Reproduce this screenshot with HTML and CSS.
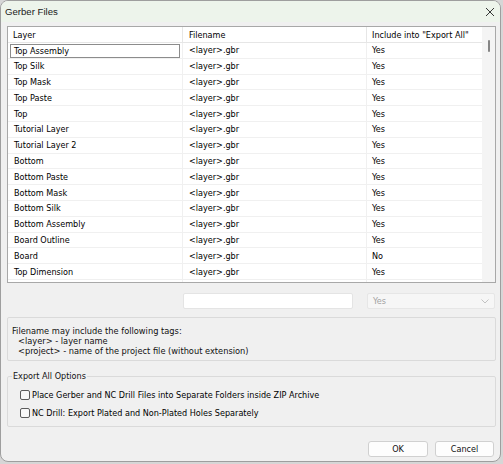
FILE: index.html
```html
<!DOCTYPE html>
<html>
<head>
<meta charset="utf-8">
<link rel="stylesheet" href="styles.css">
</head>
<body>
<div class="win">
  <div class="titlebar">
    <span class="title">Gerber Files</span>
    <svg class="close" width="10" height="10" viewBox="0 0 10 10"><path d="M1 1 L9 9 M9 1 L1 9" stroke="#222" stroke-width="0.9" fill="none"/></svg>
  </div>
  <div class="content">
    <div class="grid">
      <div class="cols">
        <div class="hrow">
          <div class="c1">Layer</div>
          <div class="c2">Filename</div>
          <div class="c3">Include into &quot;Export All&quot;</div>
        </div>
        <div class="row"><div class="c1 focused"><span class="focus">Top Assembly</span></div><div class="c2">&lt;layer&gt;.gbr</div><div class="c3">Yes</div></div>
        <div class="row"><div class="c1">Top Silk</div><div class="c2">&lt;layer&gt;.gbr</div><div class="c3">Yes</div></div>
        <div class="row"><div class="c1">Top Mask</div><div class="c2">&lt;layer&gt;.gbr</div><div class="c3">Yes</div></div>
        <div class="row"><div class="c1">Top Paste</div><div class="c2">&lt;layer&gt;.gbr</div><div class="c3">Yes</div></div>
        <div class="row"><div class="c1">Top</div><div class="c2">&lt;layer&gt;.gbr</div><div class="c3">Yes</div></div>
        <div class="row"><div class="c1">Tutorial Layer</div><div class="c2">&lt;layer&gt;.gbr</div><div class="c3">Yes</div></div>
        <div class="row"><div class="c1">Tutorial Layer 2</div><div class="c2">&lt;layer&gt;.gbr</div><div class="c3">Yes</div></div>
        <div class="row"><div class="c1">Bottom</div><div class="c2">&lt;layer&gt;.gbr</div><div class="c3">Yes</div></div>
        <div class="row"><div class="c1">Bottom Paste</div><div class="c2">&lt;layer&gt;.gbr</div><div class="c3">Yes</div></div>
        <div class="row"><div class="c1">Bottom Mask</div><div class="c2">&lt;layer&gt;.gbr</div><div class="c3">Yes</div></div>
        <div class="row"><div class="c1">Bottom Silk</div><div class="c2">&lt;layer&gt;.gbr</div><div class="c3">Yes</div></div>
        <div class="row"><div class="c1">Bottom Assembly</div><div class="c2">&lt;layer&gt;.gbr</div><div class="c3">Yes</div></div>
        <div class="row"><div class="c1">Board Outline</div><div class="c2">&lt;layer&gt;.gbr</div><div class="c3">Yes</div></div>
        <div class="row"><div class="c1">Board</div><div class="c2">&lt;layer&gt;.gbr</div><div class="c3">No</div></div>
        <div class="row"><div class="c1">Top Dimension</div><div class="c2">&lt;layer&gt;.gbr</div><div class="c3">Yes</div></div>
        <div class="row"><div class="c1"></div><div class="c2"></div><div class="c3"></div></div>
      </div>
      <div class="scroll"><div class="thumb"></div></div>
    </div>

    <div class="editrow">
      <div class="input"></div>
      <div class="select"><span>Yes</span>
        <svg width="8" height="5" viewBox="0 0 8 5"><path d="M0.5 0.5 L4 4 L7.5 0.5" stroke="#b5b5b5" stroke-width="0.8" fill="none"/></svg>
      </div>
    </div>

    <div class="info">
      <div>Filename may include the following tags:</div>
      <div class="ind">&lt;layer&gt; - layer name</div>
      <div class="ind">&lt;project&gt; - name of the project file (without extension)</div>
    </div>

    <fieldset class="group">
      <legend>Export All Options</legend>
      <div class="opts">
        <div class="opt"><span class="box"></span><span>Place Gerber and NC Drill Files into Separate Folders inside ZIP Archive</span></div>
        <div class="opt"><span class="box"></span><span>NC Drill: Export Plated and Non-Plated Holes Separately</span></div>
      </div>
    </fieldset>

    <div class="buttons">
      <div class="btn ok">OK</div>
      <div class="btn cancel">Cancel</div>
    </div>
  </div>
</div>
</body>
</html>
```
FILE: styles.css
```css
* { box-sizing: border-box; }
html, body { margin: 0; padding: 0; }
body {
  width: 503px;
  height: 464px;
  overflow: hidden;
  background: #d6d6d6;
  font-family: "DejaVu Sans Condensed", "DejaVu Sans", sans-serif;
  font-size: 9px;
  color: #000;
}
.win {
  width: 501px;
  height: 462px;
  background: #f0f0f0;
  border: 1px solid #9e9e9e;
  border-radius: 8px;
  overflow: hidden;
  display: flex;
  flex-direction: column;
}
.titlebar {
  height: 21px;
  flex: none;
  background: #edf4eb;
  display: flex;
  align-items: center;
  justify-content: space-between;
  padding: 0 5px 0 4px;
}
.title { font-family: "Liberation Sans", Arial, sans-serif; font-size: 9.6px; color: #1a1a1a; }
.close { display: block; }
.content {
  padding: 4px 4px 0 6px;
  display: flex;
  flex-direction: column;
}
.grid {
  height: 257px;
  border: 1px solid #a8a8a8;
  background: #fff;
  display: flex;
  overflow: hidden;
}
.cols { width: 474px; flex: none; }
.hrow, .row { display: flex; }
.hrow { height: 16px; border-bottom: 1px solid #e6e6e6; }
.row { height: 15.8px; border-bottom: 1px solid #f0f0f0; }
.c1, .c2, .c3 { display: flex; align-items: center; white-space: nowrap; overflow: hidden; }
.c1 { width: 175px; padding-left: 6px; border-right: 1px solid #f0f0f0; }
.c2 { width: 184px; padding-left: 6px; border-right: 1px solid #f0f0f0; }
.c3 { width: 115px; padding-left: 5px; }
.hrow .c1 { padding-left: 5px; border-right-color: #e6e6e6; }
.hrow .c2 { border-right-color: #e6e6e6; }
.c1.focused { padding: 1px 2px 0 2px; }
.focus {
  flex: 1;
  height: 100%;
  border: 1px solid #8c8c8c;
  padding-left: 3px;
  display: flex;
  align-items: center;
}
.scroll { flex: 1; background: #f4f4f4; display: flex; justify-content: center; }
.thumb { width: 2px; height: 12px; margin-top: 13px; background: #858585; border-radius: 1px; }

.editrow {
  margin-top: 10px;
  display: flex;
  padding-left: 176px;
  height: 16px;
}
.input {
  width: 170px;
  background: #fff;
  border: 1px solid #e4e4e4;
  border-radius: 2px;
}
.select {
  margin-left: 14px;
  width: 128px;
  background: #f6f6f6;
  border: 1px solid #e6e6e6;
  border-radius: 2px;
  display: flex;
  align-items: center;
  justify-content: space-between;
  padding: 0 5px 0 5px;
  color: #a2a2a2;
}
.info {
  margin-top: 8px;
  height: 44px;
  border: 1px solid #dadada;
  border-radius: 2px;
  padding: 7.5px 4px 0 4px;
  line-height: 10.4px;
  color: #111;
  font-size: 9.2px;
}
.ind { padding-left: 6px; }
.group {
  margin: 10px 0 0 0;
  border: 1px solid #dadada;
  border-radius: 2px;
  padding: 0 4px 4px 4px;
  min-width: 0;
}
.group legend { padding: 0 1px; line-height: 11px; color: #111; }
.opts { padding: 4px 0 0 8px; }
.opt { display: flex; align-items: center; height: 18px; }
.box {
  width: 10px;
  height: 10px;
  border: 1px solid #5c5c5c;
  border-radius: 2px;
  background: #f8f8f8;
  margin-right: 2px;
  flex: none;
}
.buttons {
  margin-top: 14px;
  display: flex;
  justify-content: flex-end;
  gap: 7px;
  padding-right: 2px;
}
.btn {
  height: 16px;
  background: #fdfdfd;
  border: 1px solid #d0d0d0;
  border-radius: 3px;
  display: flex;
  align-items: center;
  justify-content: center;
  color: #111;
}
.ok { width: 60px; }
.cancel { width: 59px; }
```
